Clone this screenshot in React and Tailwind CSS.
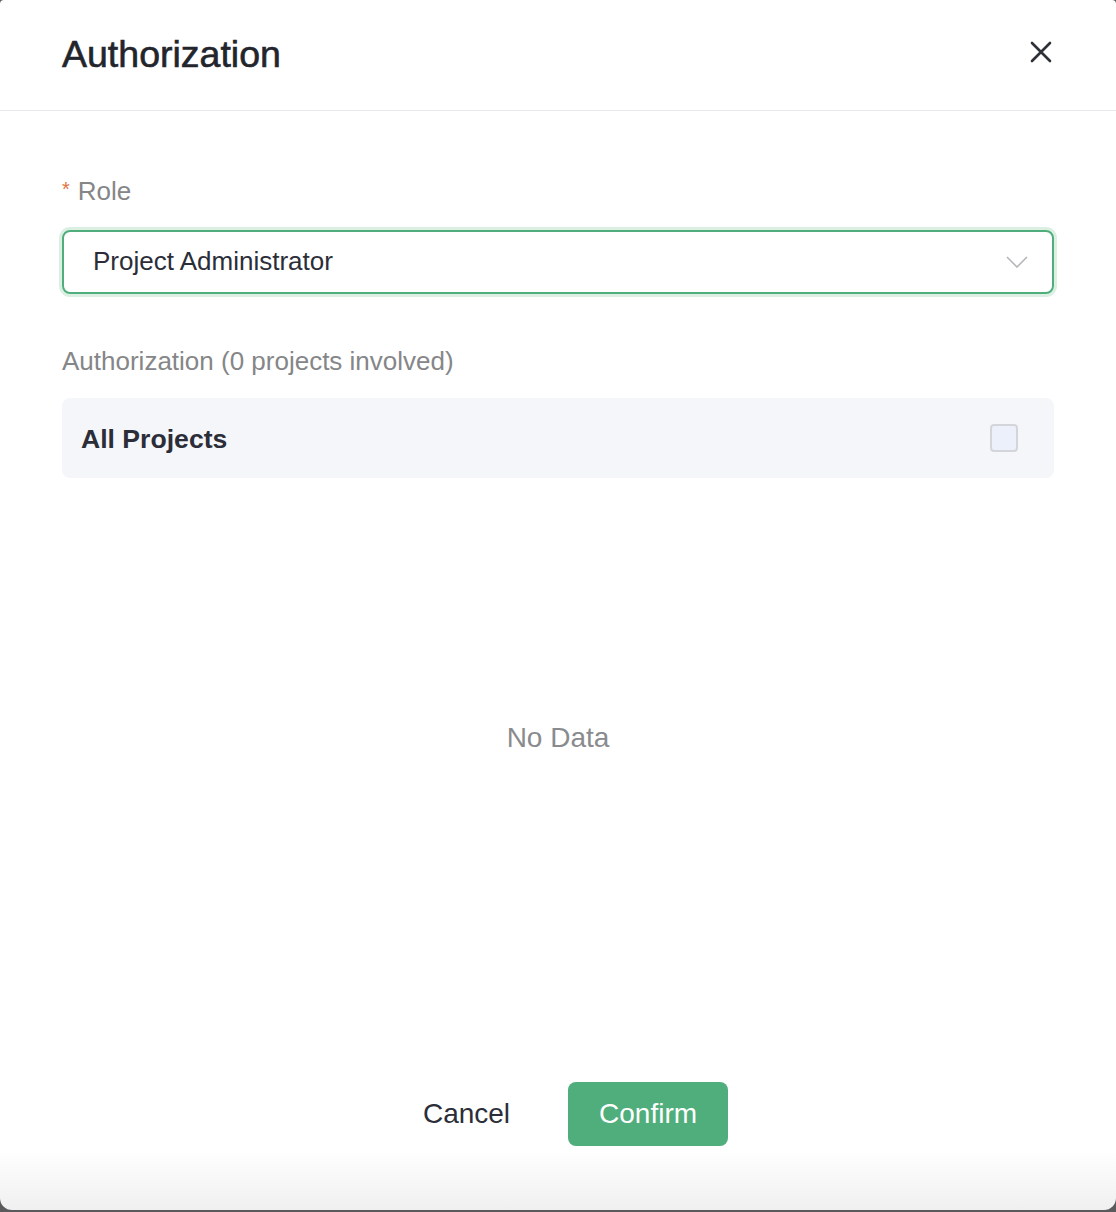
import { useState } from "react";

const font = { fontFamily: '"Liberation Sans", Arial, sans-serif' };

function CloseIcon() {
  return (
    <svg width="22" height="22" viewBox="0 0 22 22" fill="none">
      <path d="M2 2L20 20M20 2L2 20" stroke="#2f3139" strokeWidth="2.6" strokeLinecap="round" />
    </svg>
  );
}

function Chevron() {
  return (
    <svg width="22" height="12" viewBox="0 0 22 12" fill="none">
      <path d="M1 1L11 11L21 1" stroke="#b5b6ba" strokeWidth="1.6" />
    </svg>
  );
}

export default function App() {
  const [allChecked, setAllChecked] = useState(false);

  return (
    <div className="h-[1212px] w-[1116px] bg-[#5a5a5c] overflow-hidden" style={font}>
      <div className="h-[1210px] w-full bg-gradient-to-b from-white from-[95%] to-[#f0f0f0] rounded-t-[4px] rounded-b-[12px] flex flex-col">
        {/* Header */}
        <div className="h-[111px] border-b border-[#e6e8ec] px-[62px] flex items-center justify-between">
          <h1 className="text-[37.5px] leading-none text-[#23252d] [-webkit-text-stroke:0.6px_#23252d]">
            Authorization
          </h1>
          <button className="mr-[2px] mt-[-6px]">
            <CloseIcon />
          </button>
        </div>

        {/* Body */}
        <div className="px-[62px] flex-1 flex flex-col">
          <div className="mt-[62px] h-[36px] flex items-center text-[26px] text-[#858688]">
            <span className="text-[#e2733f] text-[20px] mr-[8px] self-start mt-[1px]">*</span>
            Role
          </div>

          <div className="mt-[21px] h-[64px] rounded-[8px] border-2 border-[#4fae7b] ring-[3px] ring-[#dcefe3] flex items-center justify-between pl-[29px] pr-[24px]">
            <span className="text-[26px] text-[#2b2e38] mt-[-2px]">Project Administrator</span>
            <Chevron />
          </div>

          <div className="mt-[49px] h-[36px] flex items-center text-[26px] text-[#858688]">
            Authorization (0 projects involved)
          </div>

          <div className="mt-[19px] h-[80px] rounded-[8px] bg-[#f5f6fa] flex items-center justify-between pl-[19px] pr-[36px]">
            <span className="text-[26.6px] font-bold text-[#2b2e38] mt-[4px]">All Projects</span>
            <button
              onClick={() => setAllChecked(!allChecked)}
              className="w-[28px] h-[28px] rounded-[4px] border-2 border-[#d3d5da] bg-[#ebf0fa]"
            />
          </div>

          <div className="mt-[242px] h-[36px] flex items-center justify-center text-[28px] text-[#8a8b8e]">
            No Data
          </div>

          {/* Footer */}
          <div className="mt-auto pb-[64px] pl-[35px] flex items-center justify-center gap-[58px]">
            <button className="text-[28px] text-[#2b2e38] h-[64px]">Cancel</button>
            <button className="h-[64px] w-[160px] rounded-[8px] bg-[#4fae7b] text-white text-[28px]">
              Confirm
            </button>
          </div>
        </div>
      </div>
    </div>
  );
}
